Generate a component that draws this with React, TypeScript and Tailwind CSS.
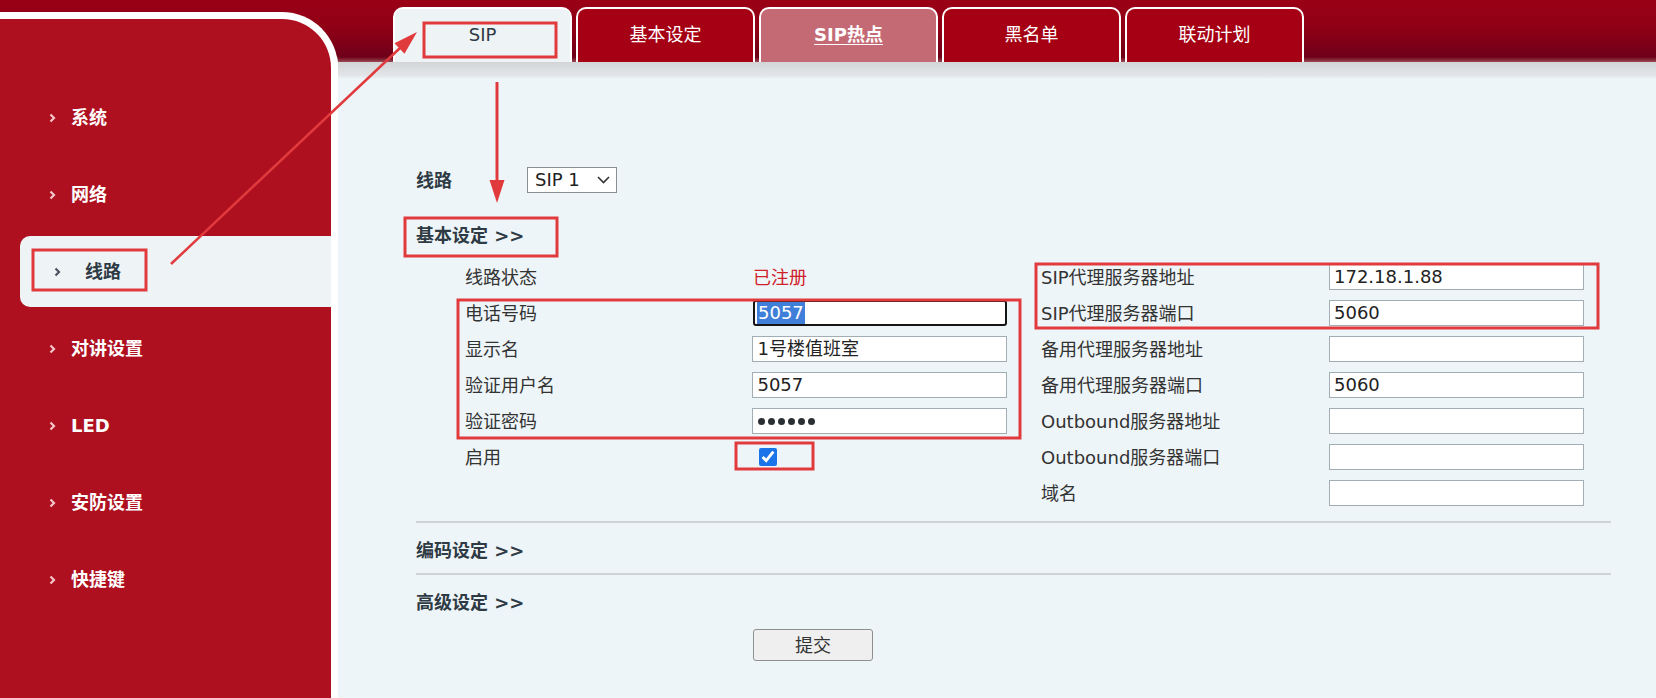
import React from 'react';

const sideItems = ['系统', '网络', '线路', '对讲设置', 'LED', '安防设置', '快捷键'];
const tabs = ['SIP', '基本设定', 'SIP热点', '黑名单', '联动计划'];

const rightRows = [
  { label: 'SIP代理服务器地址', value: '172.18.1.88' },
  { label: 'SIP代理服务器端口', value: '5060' },
  { label: '备用代理服务器地址', value: '' },
  { label: '备用代理服务器端口', value: '5060' },
  { label: 'Outbound服务器地址', value: '' },
  { label: 'Outbound服务器端口', value: '' },
  { label: '域名', value: '' },
];

function Chevron({ dark }: { dark?: boolean }) {
  return (
    <svg width="7" height="10" viewBox="0 0 7 10" className="shrink-0">
      <polyline
        points="1.5,1.5 5,5 1.5,8.5"
        fill="none"
        stroke={dark ? '#4a5560' : '#f3c6c9'}
        strokeWidth="2.2"
      />
    </svg>
  );
}

function Field({ children, focused }: { children?: React.ReactNode; focused?: boolean }) {
  return (
    <div
      className={
        focused
          ? 'w-[254px] h-[26px] bg-white border-2 border-[#151515] rounded-[3px] flex items-center pl-[2px] text-[18px] text-[#222] leading-none'
          : 'w-[255px] h-[26px] bg-white border border-[#a3adb4] flex items-center pl-[4px] text-[18px] text-[#222] leading-none'
      }
    >
      {children}
    </div>
  );
}

function Heading({ text }: { text: string }) {
  return (
    <div className="h-[26px] flex items-center text-[18px] font-bold text-[#2e3a44]">
      {text} {'>>'}
    </div>
  );
}

function Annotations() {
  const red = '#e13a3d';
  return (
    <svg
      width="1656"
      height="698"
      viewBox="0 0 1656 698"
      className="absolute left-0 top-0 pointer-events-none"
    >
      <g fill="none" stroke={red} strokeWidth="3">
        <rect x="424" y="23" width="132" height="34" />
        <rect x="33" y="250" width="113" height="40" />
        <rect x="405" y="218" width="152" height="38" />
        <rect x="458" y="300" width="562" height="138" />
        <rect x="736" y="443" width="77" height="26" />
        <rect x="1036" y="264" width="562" height="64" />
      </g>
      <line x1="171" y1="264" x2="400" y2="48" stroke={red} strokeWidth="2.5" />
      <polygon points="417,32 404.5,53.8 394.5,43.2" fill={red} />
      <line x1="497" y1="82" x2="497" y2="182" stroke={red} strokeWidth="3" />
      <polygon points="497,203 489.5,180 504.5,180" fill={red} />
    </svg>
  );
}

export default function App() {
  return (
    <div className="relative w-full h-[698px] overflow-hidden flex bg-[#eef5f8] font-['DejaVu_Sans','Noto_Sans_CJK_SC',sans-serif]">
      {/* Sidebar */}
      <div className="w-[338px] shrink-0 bg-[linear-gradient(to_bottom,#9a0016_0px,#8e0016_30px,#6e0019_56px,#d8dadc_62px)]">
        <div className="mt-[12px] h-[686px] bg-[#ae1020] border-t-[7px] border-r-[7px] border-white rounded-tr-[56px] pt-[60px]">
          {sideItems.map((item) => {
            const active = item === '线路';
            return (
              <div key={item} className="h-[77px] py-[3px]">
                {active ? (
                  <div className="h-[71px] ml-[20px] bg-[#eef3f6] rounded-l-[10px] flex items-center pl-[34px]">
                    <Chevron dark />
                    <span className="ml-[24px] text-[18px] font-bold text-[#2e3a44]">{item}</span>
                  </div>
                ) : (
                  <div className="h-[71px] flex items-center pl-[49px]">
                    <Chevron />
                    <span className="ml-[15px] text-[18px] font-bold text-white">{item}</span>
                  </div>
                )}
              </div>
            );
          })}
        </div>
      </div>

      {/* Main */}
      <div className="flex-1 flex flex-col">
        <div className="h-[62px] bg-[linear-gradient(to_bottom,#9a0016_0%,#8e0016_48%,#6e0019_92%,#9a4a55_100%)] flex items-end pl-[55px] gap-[4px]">
          {tabs.map((t) => {
            let cls = 'bg-[#a50013] text-white';
            if (t === 'SIP') cls = 'bg-[#eef3f6] text-[#2e3a44]';
            if (t === 'SIP热点') cls = 'bg-[#c46a75] text-white font-bold underline underline-offset-[3px]';
            return (
              <div
                key={t}
                className={`w-[179px] h-[55px] border-2 border-b-0 border-white rounded-t-[10px] flex items-center justify-center pb-[3px] text-[18px] ${cls}`}
              >
                {t}
              </div>
            );
          })}
        </div>
        <div className="h-[16px] bg-[linear-gradient(to_bottom,#d2d4d6,#e2e5e7_80%,#e9eef0)]" />

        <div className="flex-1 pl-[78px] text-[#333]">
          {/* Line select */}
          <div className="mt-[89px] h-[26px] flex items-center">
            <div className="w-[111px] text-[18px] font-bold text-[#2e3a44]">线路</div>
            <div className="w-[90px] h-[26px] bg-white border border-[#8a8f93] flex items-center pl-[7px] pr-[6px] justify-between text-[18px] text-[#222] leading-none">
              <span>SIP 1</span>
              <svg width="13" height="8" viewBox="0 0 13 8">
                <polyline points="1,1 6.5,6.5 12,1" fill="none" stroke="#333" strokeWidth="1.6" />
              </svg>
            </div>
          </div>

          <div className="mt-[29px]">
            <Heading text="基本设定" />
          </div>

          {/* Form */}
          <div className="mt-[11px] ml-[49px] flex">
            <div className="w-[542px] flex flex-col text-[18px]">
              <div className="h-[36px] flex items-center">
                <div className="w-[288px]">线路状态</div>
                <div className="text-[#d0202a]">已注册</div>
              </div>
              <div className="h-[36px] flex items-center">
                <div className="w-[288px]">电话号码</div>
                <Field focused>
                  <span className="bg-[#3f7fd9] text-white px-[1px] py-[2px]">5057</span>
                </Field>
              </div>
              <div className="h-[36px] flex items-center">
                <div className="w-[288px]">显示名</div>
                <Field>1号楼值班室</Field>
              </div>
              <div className="h-[36px] flex items-center">
                <div className="w-[288px]">验证用户名</div>
                <Field>5057</Field>
              </div>
              <div className="h-[36px] flex items-center">
                <div className="w-[288px]">验证密码</div>
                <Field>
                  <div className="flex gap-[3px] pl-[1px]">
                    {[0, 1, 2, 3, 4, 5].map((i) => (
                      <span key={i} className="w-[7px] h-[7px] rounded-full bg-[#2a2f33]" />
                    ))}
                  </div>
                </Field>
              </div>
              <div className="h-[36px] flex items-center">
                <div className="w-[294px]">启用</div>
                <input
                  type="checkbox"
                  defaultChecked
                  className="w-[18px] h-[18px] m-0 accent-[#1a73e8]"
                />
              </div>
            </div>

            <div className="ml-[34px] flex flex-col text-[18px]">
              {rightRows.map((r) => (
                <div key={r.label} className="h-[36px] flex items-center">
                  <div className="w-[288px]">{r.label}</div>
                  <Field>{r.value}</Field>
                </div>
              ))}
            </div>
          </div>

          <div className="mt-[10px] w-[1195px] h-[2px] bg-[#cfd3d5]" />
          <div className="mt-[14px]">
            <Heading text="编码设定" />
          </div>
          <div className="mt-[10px] w-[1195px] h-[2px] bg-[#cfd3d5]" />
          <div className="mt-[14px]">
            <Heading text="高级设定" />
          </div>

          <div className="mt-[14px] ml-[337px]">
            <button className="w-[120px] h-[32px] bg-[#efefef] border border-[#8f8f8f] rounded-[3px] text-[18px] text-[#333] flex items-center justify-center">
              提交
            </button>
          </div>
        </div>
      </div>

      <Annotations />
    </div>
  );
}
